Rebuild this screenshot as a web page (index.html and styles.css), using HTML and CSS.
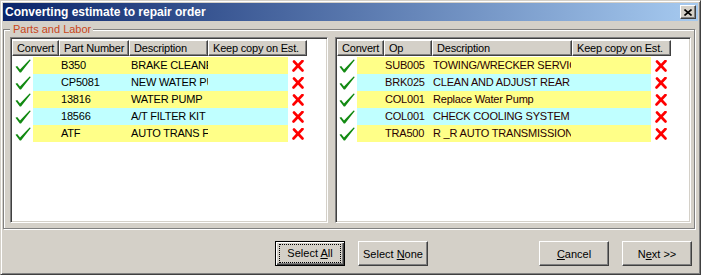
FILE: index.html
```html
<!DOCTYPE html>
<html lang="en">
<head>
    <meta charset="UTF-8">
    <title>Converting estimate to repair order</title>
    <link rel="stylesheet" href="styles.css">
</head>
<body>
    <div class="window">
        <div class="titlebar">
            <span class="title">Converting estimate to repair order</span>
            <span class="close">
                <svg width="8" height="7" viewBox="0 0 8 7"><path d="M0.5 0.5 L7.5 6.5 M7.5 0.5 L0.5 6.5" stroke="#000" stroke-width="1.6"/></svg>
            </span>
        </div>

        <fieldset class="group">
            <legend>Parts and Labor</legend>
            <div class="lists">
                <!-- parts -->
                <div class="list parts">
                    <div class="head">
                        <span class="hc w-conv">Convert</span>
                        <span class="hc w-part">Part Number</span>
                        <span class="hc w-pdesc">Description</span>
                        <span class="hc w-keep">Keep copy on Est.</span>
                    </div>
                    <div class="row y">
                        <span class="chk"><svg class="ok" viewBox="0 0 16 14"><path d="M0.5 7.8 L2.2 6.9 L5 10.4 L14.6 0.5 L15.8 1 L6 13.6 L4.8 13.6 Z"/></svg></span>
                        <span class="cell lead"></span><span class="cell w-part">B350</span><span class="cell w-pdesc">BRAKE CLEANER</span><span class="cell pad"></span>
                        <span class="del"><svg class="no" viewBox="0 0 12 12"><path d="M2 1.5 L10.5 10.5 M10.5 1 L1.5 10.5"/></svg></span>
                    </div>
                    <div class="row c">
                        <span class="chk"><svg class="ok" viewBox="0 0 16 14"><path d="M0.5 7.8 L2.2 6.9 L5 10.4 L14.6 0.5 L15.8 1 L6 13.6 L4.8 13.6 Z"/></svg></span>
                        <span class="cell lead"></span><span class="cell w-part">CP5081</span><span class="cell w-pdesc">NEW WATER PUMP</span><span class="cell pad"></span>
                        <span class="del"><svg class="no" viewBox="0 0 12 12"><path d="M2 1.5 L10.5 10.5 M10.5 1 L1.5 10.5"/></svg></span>
                    </div>
                    <div class="row y">
                        <span class="chk"><svg class="ok" viewBox="0 0 16 14"><path d="M0.5 7.8 L2.2 6.9 L5 10.4 L14.6 0.5 L15.8 1 L6 13.6 L4.8 13.6 Z"/></svg></span>
                        <span class="cell lead"></span><span class="cell w-part">13816</span><span class="cell w-pdesc">WATER PUMP</span><span class="cell pad"></span>
                        <span class="del"><svg class="no" viewBox="0 0 12 12"><path d="M2 1.5 L10.5 10.5 M10.5 1 L1.5 10.5"/></svg></span>
                    </div>
                    <div class="row c">
                        <span class="chk"><svg class="ok" viewBox="0 0 16 14"><path d="M0.5 7.8 L2.2 6.9 L5 10.4 L14.6 0.5 L15.8 1 L6 13.6 L4.8 13.6 Z"/></svg></span>
                        <span class="cell lead"></span><span class="cell w-part">18566</span><span class="cell w-pdesc">A/T FILTER KIT</span><span class="cell pad"></span>
                        <span class="del"><svg class="no" viewBox="0 0 12 12"><path d="M2 1.5 L10.5 10.5 M10.5 1 L1.5 10.5"/></svg></span>
                    </div>
                    <div class="row y">
                        <span class="chk"><svg class="ok" viewBox="0 0 16 14"><path d="M0.5 7.8 L2.2 6.9 L5 10.4 L14.6 0.5 L15.8 1 L6 13.6 L4.8 13.6 Z"/></svg></span>
                        <span class="cell lead"></span><span class="cell w-part">ATF</span><span class="cell w-pdesc">AUTO TRANS FLUID</span><span class="cell pad"></span>
                        <span class="del"><svg class="no" viewBox="0 0 12 12"><path d="M2 1.5 L10.5 10.5 M10.5 1 L1.5 10.5"/></svg></span>
                    </div>
                </div>

                <!-- labor -->
                <div class="list labor">
                    <div class="head">
                        <span class="hc w-conv">Convert</span>
                        <span class="hc w-op">Op</span>
                        <span class="hc w-ldesc">Description</span>
                        <span class="hc w-keep">Keep copy on Est.</span>
                    </div>
                    <div class="row y">
                        <span class="chk"><svg class="ok" viewBox="0 0 16 14"><path d="M0.5 7.8 L2.2 6.9 L5 10.4 L14.6 0.5 L15.8 1 L6 13.6 L4.8 13.6 Z"/></svg></span>
                        <span class="cell lead"></span><span class="cell w-op">SUB005</span><span class="cell w-ldesc">TOWING/WRECKER SERVICE</span><span class="cell pad"></span>
                        <span class="del"><svg class="no" viewBox="0 0 12 12"><path d="M2 1.5 L10.5 10.5 M10.5 1 L1.5 10.5"/></svg></span>
                    </div>
                    <div class="row c">
                        <span class="chk"><svg class="ok" viewBox="0 0 16 14"><path d="M0.5 7.8 L2.2 6.9 L5 10.4 L14.6 0.5 L15.8 1 L6 13.6 L4.8 13.6 Z"/></svg></span>
                        <span class="cell lead"></span><span class="cell w-op">BRK025</span><span class="cell w-ldesc">CLEAN AND ADJUST REAR BRAKES</span><span class="cell pad"></span>
                        <span class="del"><svg class="no" viewBox="0 0 12 12"><path d="M2 1.5 L10.5 10.5 M10.5 1 L1.5 10.5"/></svg></span>
                    </div>
                    <div class="row y">
                        <span class="chk"><svg class="ok" viewBox="0 0 16 14"><path d="M0.5 7.8 L2.2 6.9 L5 10.4 L14.6 0.5 L15.8 1 L6 13.6 L4.8 13.6 Z"/></svg></span>
                        <span class="cell lead"></span><span class="cell w-op">COL001</span><span class="cell w-ldesc">Replace Water Pump</span><span class="cell pad"></span>
                        <span class="del"><svg class="no" viewBox="0 0 12 12"><path d="M2 1.5 L10.5 10.5 M10.5 1 L1.5 10.5"/></svg></span>
                    </div>
                    <div class="row c">
                        <span class="chk"><svg class="ok" viewBox="0 0 16 14"><path d="M0.5 7.8 L2.2 6.9 L5 10.4 L14.6 0.5 L15.8 1 L6 13.6 L4.8 13.6 Z"/></svg></span>
                        <span class="cell lead"></span><span class="cell w-op">COL001</span><span class="cell w-ldesc">CHECK COOLING SYSTEM ...</span><span class="cell pad"></span>
                        <span class="del"><svg class="no" viewBox="0 0 12 12"><path d="M2 1.5 L10.5 10.5 M10.5 1 L1.5 10.5"/></svg></span>
                    </div>
                    <div class="row y">
                        <span class="chk"><svg class="ok" viewBox="0 0 16 14"><path d="M0.5 7.8 L2.2 6.9 L5 10.4 L14.6 0.5 L15.8 1 L6 13.6 L4.8 13.6 Z"/></svg></span>
                        <span class="cell lead"></span><span class="cell w-op">TRA500</span><span class="cell w-ldesc">R _R AUTO TRANSMISSION</span><span class="cell pad"></span>
                        <span class="del"><svg class="no" viewBox="0 0 12 12"><path d="M2 1.5 L10.5 10.5 M10.5 1 L1.5 10.5"/></svg></span>
                    </div>
                </div>
            </div>
        </fieldset>

        <div class="actions">
            <button class="btn default"><span class="focus">Select <u>A</u>ll</span></button>
            <button class="btn">Select <u>N</u>one</button>
            <button class="btn push"><u>C</u>ancel</button>
            <button class="btn">N<u>e</u>xt &gt;&gt;</button>
        </div>
    </div>
</body>
</html>
```

FILE: styles.css
```css
* {
    box-sizing: border-box;
}

body {
    margin: 0;
    width: 701px;
    height: 275px;
    background: #d4d0c8;
    font-family: "Liberation Sans", Arial, sans-serif;
    font-size: 11px;
    letter-spacing: -0.2px;
    color: #000;
}

.window {
    display: flex;
    flex-direction: column;
    width: 701px;
    height: 275px;
    padding: 2px;
    background: #d4d0c8;
    border: 1px solid;
    border-color: #d4d0c8 #404040 #404040 #d4d0c8;
    box-shadow: inset 1px 1px 0 #fff, inset -1px -1px 0 #808080;
}

/* title bar */
.titlebar {
    display: flex;
    align-items: center;
    justify-content: space-between;
    height: 18px;
    padding: 0 2px 0 2px;
    background: linear-gradient(to right, #0a246a, #a6caf0);
    color: #fff;
}

.title {
    font-weight: bold;
    font-size: 12px;
    letter-spacing: 0;
    white-space: nowrap;
}

.close {
    display: flex;
    align-items: center;
    justify-content: center;
    width: 16px;
    height: 14px;
    background: #d4d0c8;
    border: 1px solid;
    border-color: #fff #404040 #404040 #fff;
    box-shadow: inset -1px -1px 0 #808080;
}

/* group box */
.group {
    margin: 2px 3px 0 0;
    padding: 1px 3px 5px 6px;
    min-width: 0;
    border: 1px solid #808080;
    box-shadow: 1px 1px 0 #fff, inset 1px 1px 0 #fff;
}

.group legend {
    padding: 0 2px 0 3px;
    line-height: 13px;
    letter-spacing: 0;
    color: #c8461a;
    background: #d4d0c8;
}

.lists {
    display: flex;
    gap: 7px;
}

.list {
    height: 186px;
    padding: 2px 1px 1px 1px;
    background: #fff;
    border: 1px solid;
    border-color: #808080 #fff #fff #808080;
    box-shadow: inset 1px 1px 0 #404040, inset -1px -1px 0 #d4d0c8;
    overflow: hidden;
}

.parts {
    width: 318px;
}

.labor {
    flex: 1;
}

/* header */
.head {
    display: flex;
    margin-bottom: 1px;
}

.hc {
    height: 16px;
    padding-left: 4px;
    line-height: 14px;
    white-space: nowrap;
    overflow: hidden;
    background: #d4d0c8;
    border: 1px solid;
    border-color: #fff #404040 #404040 #fff;
    box-shadow: inset -1px -1px 0 #808080;
}

.w-conv { width: 47px; }
.w-part { width: 70px; }
.w-pdesc { width: 79px; }
.w-op { width: 48px; }
.w-ldesc { width: 140px; }
.w-keep { width: 99px; }

/* rows */
.row {
    display: flex;
    height: 17px;
    line-height: 17px;
}

.chk {
    display: flex;
    align-items: center;
    width: 21px;
    padding-left: 3px;
    background: #fff;
}

.labor .chk {
    width: 20px;
    padding-left: 2px;
}

.ok {
    width: 16px;
    height: 14px;
    fill: #128a12;
}

.cell {
    padding-left: 2px;
    white-space: nowrap;
    overflow: hidden;
}

.row.y .cell { background: #ffff88; }
.row.c .cell { background: #c0ffff; }

.labor .cell { color: #2a0000; }

.lead { width: 26px; }
.pad { width: 80px; }

.del {
    display: flex;
    align-items: center;
    padding-left: 4px;
}

.no {
    width: 12px;
    height: 12px;
    fill: none;
    stroke: #f00;
    stroke-width: 2.6;
    stroke-linecap: round;
}

/* buttons */
.actions {
    display: flex;
    align-items: flex-start;
    gap: 13px;
    padding: 12px 6px 0 272px;
}

.btn {
    width: 70px;
    height: 25px;
    padding: 0;
    font: inherit;
    letter-spacing: 0;
    color: #000;
    text-align: center;
    background: #d4d0c8;
    border: 1px solid;
    border-color: #fff #404040 #404040 #fff;
    box-shadow: inset -1px -1px 0 #808080;
}

.btn.default {
    border-color: #000;
    box-shadow: inset 1px 1px 0 #fff, inset -1px -1px 0 #404040, inset -2px -2px 0 #808080;
}

.focus {
    display: block;
    width: 62px;
    height: 19px;
    margin: 0 auto;
    line-height: 17px;
    border: 1px dotted #000;
}

.push {
    margin-left: auto;
}
```
